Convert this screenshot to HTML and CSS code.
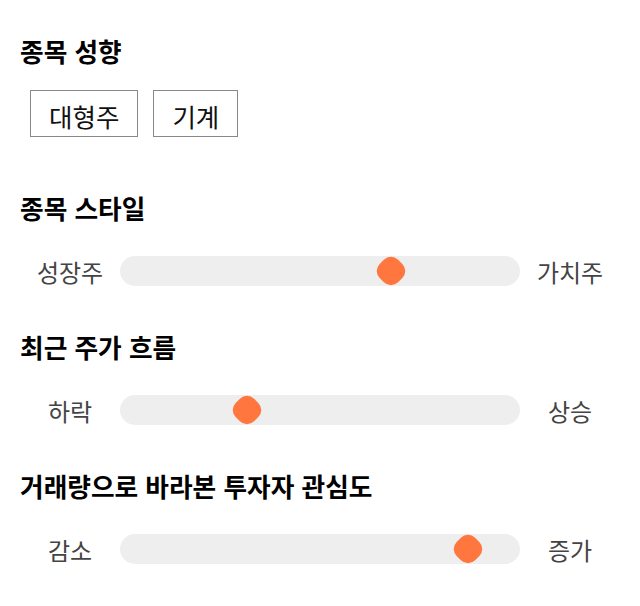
FILE: index.html
```html
<!DOCTYPE html>
<html lang="ko">

<head>
    <meta charset="UTF-8">
    <meta name="viewport" content="width=device-width, initial-scale=1.0">
    <title>종목 분석</title>
    <link rel="stylesheet" href="styles.css">
</head>

<body>
    <div class="panel">
        <section class="section section-tags">
            <h2 class="title">종목 성향</h2>
            <div class="tags">
                <span class="tag">대형주</span>
                <span class="tag">기계</span>
            </div>
        </section>

        <section class="section">
            <h2 class="title">종목 스타일</h2>
            <div class="slider-row">
                <span class="side">성장주</span>
                <div class="track"><span class="thumb" style="left: 256px"></span></div>
                <span class="side">가치주</span>
            </div>
        </section>

        <section class="section">
            <h2 class="title">최근 주가 흐름</h2>
            <div class="slider-row">
                <span class="side">하락</span>
                <div class="track"><span class="thumb" style="left: 112px"></span></div>
                <span class="side">상승</span>
            </div>
        </section>

        <section class="section">
            <h2 class="title">거래량으로 바라본 투자자 관심도</h2>
            <div class="slider-row">
                <span class="side">감소</span>
                <div class="track"><span class="thumb" style="left: 333px"></span></div>
                <span class="side">증가</span>
            </div>
        </section>
    </div>
</body>

</html>
```

FILE: styles.css
```css
body {
    margin: 0;
    background: #fff;
    font-family: "Noto Sans CJK KR", "Noto Sans", sans-serif;
    color: #000;
}

.panel {
    width: 600px;
    padding: 33px 20px 20px;
}

.section + .section {
    margin-top: 30px;
}

.section-tags {
    padding-bottom: 23px;
}

.title {
    margin: 0;
    font-size: 25.7px;
    font-weight: 700;
    line-height: 36px;
}

.tags {
    display: flex;
    gap: 15px;
    padding-left: 10px;
    margin-top: 21px;
}

.tag {
    border: 1px solid #888;
    font-size: 25.5px;
    line-height: 36px;
    padding: 7px 18px 2px;
    color: #111;
}

.slider-row {
    display: flex;
    align-items: center;
    height: 56px;
    margin-top: 17px;
}

.side {
    width: 100px;
    text-align: center;
    font-size: 24px;
    color: #444;
}

.track {
    position: relative;
    width: 400px;
    height: 30px;
    border-radius: 15px;
    background: #eee;
}

.thumb {
    position: absolute;
    top: 0;
    width: 30px;
    height: 30px;
}

.thumb::before {
    content: "";
    position: absolute;
    left: 2px;
    top: 2px;
    width: 26px;
    height: 26px;
    border-radius: 10px;
    background: #ff763f;
    transform: rotate(45deg);
}
```
